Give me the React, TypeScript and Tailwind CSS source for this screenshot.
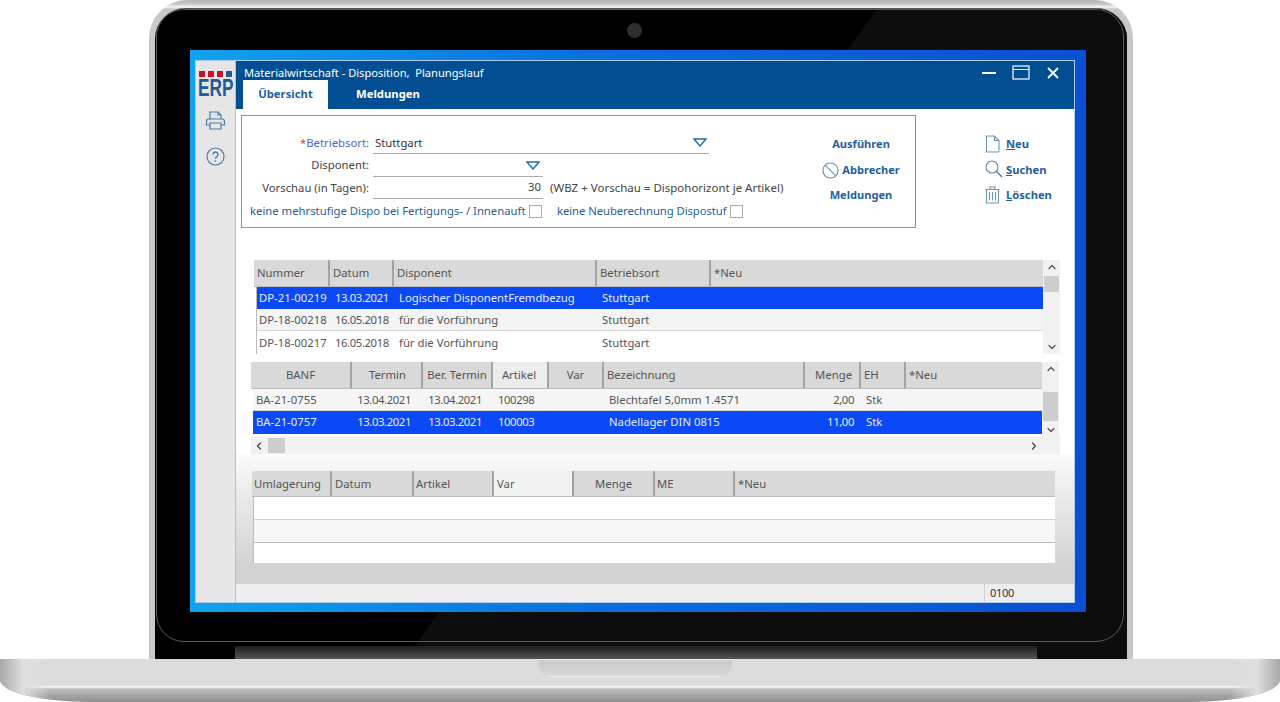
import React from "react";
import { ChevronUp, ChevronDown, ChevronLeft, ChevronRight } from "lucide-react";

const FONT = "[font-family:'Noto_Sans','Open_Sans',sans-serif]";
const NUM = "tracking-[-0.4px]";

function Tri() {
  return (
    <svg width="14" height="9" viewBox="0 0 14 9" fill="none" stroke="#1f6ea8" strokeWidth="1.4">
      <path d="M1 1h12L7 8z" />
    </svg>
  );
}

function PrinterIcon() {
  return (
    <svg width="21" height="21" viewBox="0 0 21 21" fill="none" stroke="#4d7ba8" strokeWidth="1.2">
      <path d="M5 9V2h8l3 3v4" />
      <path d="M13 2v3h3" />
      <path d="M4 9h13a2.500 2.500 0 0 1 2.500 2.500V15H16M5 15H1.500v-3.500A2.500 2.500 0 0 1 4 9" />
      <path d="M5 13h11v6H5z" />
    </svg>
  );
}

function HelpIcon() {
  return (
    <svg width="19" height="19" viewBox="0 0 19 19" fill="none" stroke="#4d7ba8" strokeWidth="1.2">
      <circle cx="9.500" cy="9.500" r="8.500" />
      <path d="M7 7.500a2.500 2.500 0 1 1 3.800 2.100c-.9.600-1.300 1-1.300 2.100" strokeWidth="1.400" />
      <path d="M9.500 13.300v1.400" strokeWidth="1.400" />
    </svg>
  );
}

function BanIcon() {
  return (
    <svg width="17" height="17" viewBox="0 0 17 17" fill="none" stroke="#6d93b8" strokeWidth="1.2">
      <circle cx="8.500" cy="8.500" r="7.500" />
      <path d="M3.200 3.200l10.600 10.600" />
    </svg>
  );
}

function DocIcon() {
  return (
    <svg width="15" height="18" viewBox="0 0 15 18" fill="none" stroke="#6d93b8" strokeWidth="1.100">
      <path d="M1.500 1h8l4.500 4.500V15.500a1.500 1.500 0 0 1-1.500 1.500h-11V1z" />
      <path d="M9.500 1v4.500H14" />
    </svg>
  );
}

function SearchIcon() {
  return (
    <svg width="18" height="18" viewBox="0 0 18 18" fill="none" stroke="#5f88b0" strokeWidth="1.100">
      <circle cx="7" cy="7" r="6" />
      <path d="M11.400 11.400l5.600 5.600" strokeWidth="1.500" />
    </svg>
  );
}

function TrashIcon() {
  return (
    <svg width="15" height="18" viewBox="0 0 15 18" fill="none" stroke="#6d93b8" strokeWidth="1.100">
      <path d="M.5 3.500h14M5 3.500V1h5v2.500" />
      <path d="M1.500 3.500V17h12V3.500" />
      <path d="M4.500 6v8.500M7.500 6v8.500M10.500 6v8.500" />
    </svg>
  );
}

function VScroll({ thumb, gap }: { thumb: string; gap: string }) {
  return (
    <div className="w-[17px] bg-[#f1f1f1] flex flex-col items-center shrink-0">
      <ChevronUp size={12} strokeWidth={2.5} color="#555" className="mt-[1px] shrink-0" />
      <div className={`${thumb} w-[15px] bg-[#cdcdcd] shrink-0 ${gap}`} />
      <ChevronDown size={12} strokeWidth={2.5} color="#555" className="mt-auto mb-[1px] shrink-0" />
    </div>
  );
}

function Head({ children, className = "" }: { children?: React.ReactNode; className?: string }) {
  return (
    <div className={`h-full border-r-2 border-[#a3a3a3] flex items-center overflow-hidden whitespace-nowrap last:border-r-0 ${className}`}>
      {children}
    </div>
  );
}

function ActionRow({ icon, children }: { icon: React.ReactNode; children: React.ReactNode }) {
  return (
    <div className="h-[25.500px] flex items-center">
      <span className="w-[21px] flex items-center shrink-0">{icon}</span>
      <span className="text-[11.200px] font-bold text-[#1f5f9e] leading-none">{children}</span>
    </div>
  );
}

const g1 = "grid grid-cols-[76px_64px_203px_114px_332px] items-center";
const g1r = "grid grid-cols-[76px_64px_203px_113px_331px] items-center";
const g2 = "grid grid-cols-[101px_71px_70px_56px_55px_201px_56px_45px_136px] items-center";
const g2r = "grid grid-cols-[98px_71px_70px_56px_55px_201px_56px_45px_137px] items-center";
const g3 = "grid grid-cols-[80px_82px_80px_80px_81px_80px_320px] items-center";

export default function App() {
  return (
    <div className={`w-[1280px] h-[702px] bg-white overflow-hidden flex flex-col ${FONT}`}>
      {/* lid */}
      <div className="ml-[149px] w-[984px] h-[659px] shrink-0 rounded-t-[38px] bg-[linear-gradient(to_bottom,#b4b4b4,#c6c6c6_4px,#f6f6f6_7px,#c8c8c8_9px)] px-[6px] pt-[8px]">
        <div className="relative h-full rounded-t-[31px] bg-black overflow-hidden border-t border-[#555] flex flex-col pt-[41px] pl-[35px]">
          <div className="absolute inset-0 bg-[#0d0d0d] [clip-path:polygon(722px_0,100%_0,100%_100%,250px_100%)]" />
          <div className="absolute left-[1px] right-[3px] top-0 bottom-[17px] rounded-[28px] border border-[#5c5c5c]" />
          <div className="absolute left-[472px] top-[14px] w-[15px] h-[15px] rounded-full bg-[#2f2f2f]" />

          {/* blue frame */}
          <div className="relative w-[896px] h-[562px] shrink-0 bg-[linear-gradient(to_right,#12a2ee,#0a6fdc_45%,#0a4fd2)] pl-[6px] pr-[12px] pt-[11px] pb-[10px]">
            <div className="h-full flex bg-white shadow-[0_0_0_1px_#a9cdec]">
              {/* sidebar */}
              <div className="w-[40px] shrink-0 bg-[#e6e6e6] border-r border-[#bdbdbd] flex flex-col items-center">
                <div className="mt-[10px] flex gap-[3px]">
                  <span className="w-[6px] h-[6px] bg-[#c8102e]" />
                  <span className="w-[6px] h-[6px] bg-[#c8102e]" />
                  <span className="w-[6px] h-[6px] bg-[#c8102e]" />
                  <span className="w-[6px] h-[6px] bg-[#1f5a94]" />
                </div>
                <div className="text-[24px] leading-[20px] font-bold text-[#1f5a94] [font-family:'Liberation_Sans',sans-serif] scale-x-[0.72] mt-[1px]">ERP</div>
                <div className="mt-[12px]"><PrinterIcon /></div>
                <div className="mt-[16px]"><HelpIcon /></div>
              </div>

              {/* main */}
              <div className="flex-1 min-w-0 flex flex-col">
                {/* title + tabs */}
                <div className="h-[48px] shrink-0 bg-[#014f92] flex flex-col">
                  <div className="h-[19px] flex items-center pl-[8px] pt-[4px] relative">
                    <span className="text-[11.100px] text-white leading-none whitespace-pre">Materialwirtschaft - Disposition,  Planungslauf</span>
                    <div className="ml-auto flex items-center pr-[15px]">
                      <svg width="14" height="2" className="mr-[16px]"><rect width="14" height="2" fill="#fff" /></svg>
                      <svg width="18" height="15" fill="none" stroke="#fff" strokeWidth="1.200" className="mr-[17px]">
                        <rect x="1" y="1" width="16" height="13" />
                        <path d="M1 4.500h16" />
                      </svg>
                      <svg width="12" height="12" fill="none" stroke="#fff" strokeWidth="1.800">
                        <path d="M1 1l10 10M11 1L1 11" />
                      </svg>
                    </div>
                  </div>
                  <div className="flex-1 flex pl-[7px]">
                    <div className="w-[85px] bg-white flex items-center justify-center pb-[1px] text-[11.300px] font-bold text-[#1f5f9e]">Übersicht</div>
                    <div className="w-[120px] flex items-center justify-center pb-[1px] text-[11.300px] font-bold text-white">Meldungen</div>
                  </div>
                </div>

                {/* top form */}
                <div className="flex items-start shrink-0">
                  <div className="ml-[5px] mt-[6px] w-[675px] h-[113px] border border-[#8f8f8f] flex text-[11.300px] text-[#444]">
                    <div className="flex-1 pt-[16px]">
                      <div className="flex h-[22px]">
                        <div className="w-[127px] text-right leading-[21px]">
                          <span className="text-[#e03a3a]">*</span><span className="text-[#4a63d8]">Betriebsort:</span>
                        </div>
                        <div className="ml-[4px] w-[336px] border-b border-[#aaa] flex items-center pl-[2px] pr-[2px] text-[#333]">
                          <span className="pt-[2px]">Stuttgart</span>
                          <span className="ml-auto -mt-[1px]"><Tri /></span>
                        </div>
                      </div>
                      <div className="flex h-[23px]">
                        <div className="w-[127px] text-right leading-[22px]">Disponent:</div>
                        <div className="ml-[4px] w-[170px] border-b border-[#aaa] flex items-center pr-[3px]">
                          <span className="ml-auto"><Tri /></span>
                        </div>
                      </div>
                      <div className="flex h-[22px]">
                        <div className="w-[127px] text-right leading-[21px]">Vorschau (in Tagen):</div>
                        <div className="ml-[4px] w-[170px] border-b border-[#aaa] flex items-center justify-end pr-[2px]">30</div>
                        <div className="ml-[7px] leading-[21px] whitespace-nowrap text-[11.500px]">(WBZ + Vorschau = Dispohorizont je Artikel)</div>
                      </div>
                      <div className="flex items-center h-[22px] mt-[1px] pl-[8px] text-[#1f5f9e] whitespace-nowrap">
                        <span className="w-[276px]">keine mehrstufige Dispo bei Fertigungs- / Innenauft</span>
                        <span className="ml-[3px] w-[13px] h-[13px] border border-[#aaa] bg-white" />
                        <span className="ml-[15px] w-[170px] tracking-[-0.07px]">keine Neuberechnung Dispostuf</span>
                        <span className="ml-[3px] w-[13px] h-[13px] border border-[#aaa] bg-white" />
                      </div>
                    </div>
                    <div className="w-[108px] shrink-0 flex flex-col items-center pt-[16px] text-[11.100px] font-bold text-[#1f5f9e]">
                      <div className="h-[25.500px] flex items-center">Ausführen</div>
                      <div className="h-[25.500px] flex items-center gap-[3px]"><BanIcon />Abbrecher</div>
                      <div className="h-[25.500px] flex items-center">Meldungen</div>
                    </div>
                  </div>
                  <div className="ml-[69px] pt-[22px]">
                    <ActionRow icon={<DocIcon />}><u>N</u>eu</ActionRow>
                    <ActionRow icon={<SearchIcon />}><u>S</u>uchen</ActionRow>
                    <ActionRow icon={<TrashIcon />}><u>L</u>öschen</ActionRow>
                  </div>
                </div>

                {/* grid 1 */}
                <div className="mt-[32px] ml-[18px] w-[806px] h-[94px] shrink-0 flex text-[11.300px] text-[#555]">
                  <div className="w-[789px] shrink-0">
                    <div className={`${g1} h-[27px] bg-[#d9d9d9] border-b border-[#bcbcbc]`}>
                      <Head className="pl-[3px]">Nummer</Head>
                      <Head className="pl-[3px]">Datum</Head>
                      <Head className="pl-[3px]">Disponent</Head>
                      <Head className="pl-[3px]">Betriebsort</Head>
                      <Head className="pl-[3px]">*Neu</Head>
                    </div>
                    <div className="ml-[2px] border-l border-[#bbb] whitespace-nowrap">
                      <div className={`${g1r} h-[22px] bg-[#0b48f6] text-[#e4ecff] pl-[2px]`}>
                        <span>DP-21-00219</span><span className={NUM}>13.03.2021</span><span>Logischer DisponentFremdbezug</span><span>Stuttgart</span><span />
                      </div>
                      <div className={`${g1r} h-[22px] bg-[#f4f4f4] border-b border-[#d6d6d6] pl-[2px] pt-[2px]`}>
                        <span>DP-18-00218</span><span className={NUM}>16.05.2018</span><span>für die Vorführung</span><span>Stuttgart</span><span />
                      </div>
                      <div className={`${g1r} h-[23px] bg-white pl-[2px] pt-[2px]`}>
                        <span>DP-18-00217</span><span className={NUM}>16.05.2018</span><span>für die Vorführung</span><span>Stuttgart</span><span />
                      </div>
                    </div>
                  </div>
                  <VScroll thumb="h-[16px]" gap="mt-[3px]" />
                </div>

                {/* grid 2 */}
                <div className="mt-[8px] ml-[15px] w-[809px] h-[92px] shrink-0 flex flex-col text-[11.300px] text-[#555]">
                  <div className="flex h-[75px]">
                    <div className="w-[791px] shrink-0 whitespace-nowrap">
                      <div className={`${g2} h-[27px] bg-[#d9d9d9] border-b border-[#bcbcbc]`}>
                        <Head className="justify-center">BANF</Head>
                        <Head className="justify-end pr-[15px]">Termin</Head>
                        <Head className="justify-center">Ber. Termin</Head>
                        <Head className="justify-center bg-[#ececec] pr-[2px]">Artikel</Head>
                        <Head className="justify-center">Var</Head>
                        <Head className="pl-[3px]">Bezeichnung</Head>
                        <Head className="justify-end pr-[7px]">Menge</Head>
                        <Head className="pl-[3px]">EH</Head>
                        <Head className="pl-[3px]">*Neu</Head>
                      </div>
                      <div className="ml-[2px]">
                        <div className={`${g2r} h-[22px] bg-[#f5f5f5] border-b border-[#d6d6d6] pt-[2px]`}>
                          <span className="pl-[3px]">BA-21-0755</span><span className={`text-right pr-[11px] ${NUM}`}>13.04.2021</span><span className={`text-right pr-[10px] ${NUM}`}>13.04.2021</span><span className={`pl-[6px] ${NUM}`}>100298</span><span /><span className="pl-[6px]">Blechtafel 5,0mm 1.4571</span><span className={`text-right pr-[6px] ${NUM}`}>2,00</span><span className="pl-[6px]">Stk</span><span />
                        </div>
                        <div className={`${g2r} h-[23px] bg-[#0b48f6] text-[#e4ecff]`}>
                          <span className="pl-[3px]">BA-21-0757</span><span className={`text-right pr-[11px] ${NUM}`}>13.03.2021</span><span className={`text-right pr-[10px] ${NUM}`}>13.03.2021</span><span className={`pl-[6px] ${NUM}`}>100003</span><span /><span className="pl-[6px]">Nadellager DIN 0815</span><span className={`text-right pr-[6px] ${NUM}`}>11,00</span><span className="pl-[6px]">Stk</span><span />
                        </div>
                      </div>
                    </div>
                    <VScroll thumb="h-[29px]" gap="mt-[17px]" />
                  </div>
                  <div className="h-[17px] bg-[#f1f1f1] flex items-center">
                    <ChevronLeft size={12} strokeWidth={2.5} color="#444" className="ml-[2px]" />
                    <div className="ml-[3px] w-[17px] h-[15px] bg-[#cdcdcd]" />
                    <ChevronRight size={12} strokeWidth={2.5} color="#444" className="ml-auto mr-[20px]" />
                  </div>
                </div>

                {/* bottom zone */}
                <div className="flex-1 flex flex-col bg-[linear-gradient(to_bottom,#fbfbfb,#f4f4f4_16px,#d3d3d3_110px)]">
                  <div className="mt-[17px] ml-[16px] w-[803px] h-[92px] shrink-0 text-[11.300px] text-[#555] whitespace-nowrap">
                    <div className={`${g3} h-[26px] bg-[#d9d9d9] border-b border-[#bcbcbc]`}>
                      <Head className="pl-[2px] pt-[2px]">Umlagerung</Head>
                      <Head className="pl-[3px] pt-[2px]">Datum</Head>
                      <Head className="pl-[2px] pt-[2px]">Artikel</Head>
                      <Head className="pl-[3px] pt-[2px] bg-[#f2f2f2]">Var</Head>
                      <Head className="justify-end pr-[21px] pt-[2px]">Menge</Head>
                      <Head className="pl-[2px] pt-[2px]">ME</Head>
                      <Head className="pl-[3px] pt-[2px]">*Neu</Head>
                    </div>
                    <div className="ml-[1px] border-l border-[#bbb]">
                      <div className="h-[23px] bg-white border-b border-[#d0d0d0]" />
                      <div className="h-[23px] bg-[#f6f6f6] border-b border-[#bdbdbd]" />
                      <div className="h-[20px] bg-white" />
                    </div>
                  </div>
                  <div className="flex-1" />
                  <div className="h-[18px] bg-[#eeeeee] flex justify-end">
                    <div className="w-[90px] border-l border-[#cfcfcf] pl-[5px] text-[11px] leading-[18px] text-[#333] tracking-[-0.3px]">0100</div>
                  </div>
                </div>
              </div>
            </div>
          </div>

          {/* hinge */}
          <div className="relative mt-auto ml-[45px] w-[802px] h-[13px] bg-[linear-gradient(to_bottom,#1e1e1e,#555)]" />
        </div>
      </div>

      {/* base */}
      <div className="relative h-[43px] shrink-0 rounded-b-[90px_22px] overflow-hidden bg-[linear-gradient(to_bottom,#dcdcdc,#dcdcdc_26px,#fafafa_28px,#bebebe_30px,#8f8f8f)] flex justify-center">
        <div className="absolute left-0 top-0 bottom-0 w-[50px] bg-[linear-gradient(to_right,#a8a8a8,#dedede_45%,transparent)]" />
        <div className="absolute right-0 top-0 bottom-0 w-[50px] bg-[linear-gradient(to_left,#a8a8a8,#dedede_45%,transparent)]" />
        <div className="w-[194px] h-[18px] mr-[10px] rounded-b-[14px] bg-[linear-gradient(to_bottom,#f0f0f0,#cacaca_2px,#d6d6d6_16px,#f0f0f0)]" />
      </div>
    </div>
  );
}
